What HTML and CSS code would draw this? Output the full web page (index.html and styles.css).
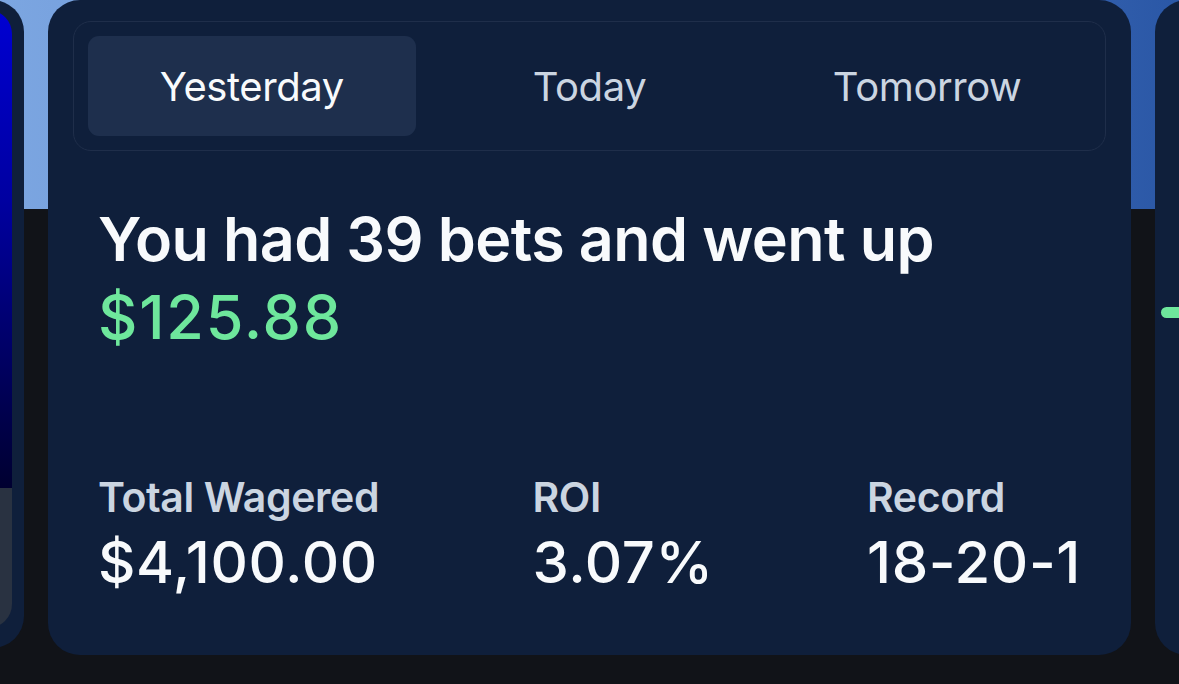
FILE: index.html
```html
<!DOCTYPE html>
<html lang="en">
<head>
<meta charset="utf-8">
<title>Bets summary</title>
<link rel="stylesheet" href="styles.css">
</head>
<body>
<div class="carousel">
  <div class="card card-side card-prev">
    <div class="media">
      <div class="media-art"></div>
      <div class="media-foot"></div>
    </div>
  </div>

  <div class="card card-main">
    <div class="tabs">
      <div class="tab active">Yesterday</div>
      <div class="tab">Today</div>
      <div class="tab">Tomorrow</div>
    </div>
    <div class="body">
      <h1 class="headline">You had 39 bets and went up<br><span class="gain">$125.88</span></h1>
      <div class="stats">
        <div class="stat">
          <div class="stat-label">Total Wagered</div>
          <div class="stat-value">$4,100.00</div>
        </div>
        <div class="stat">
          <div class="stat-label">ROI</div>
          <div class="stat-value">3.07%</div>
        </div>
        <div class="stat">
          <div class="stat-label">Record</div>
          <div class="stat-value">18-20-1</div>
        </div>
      </div>
    </div>
  </div>

  <div class="card card-side card-next">
    <div class="pill"></div>
  </div>
</div>
</body>
</html>
```

FILE: styles.css
```css
html, body {
  margin: 0;
  padding: 0;
}

body {
  width: 1179px;
  height: 684px;
  overflow: hidden;
  font-family: "Inter", "Noto Sans", "Liberation Sans", sans-serif;
  background:
    linear-gradient(to right, #7ca6e1 0%, #5a86cc 50%, #2a57a6 100%) top left / 100% 209px no-repeat,
    #111318;
}

.carousel {
  display: flex;
  justify-content: center;
  gap: 24px;
  width: 1179px;
  overflow: hidden;
}

.card {
  flex: 0 0 1083px;
  height: 655px;
  box-sizing: border-box;
  border-radius: 32px;
  background: #0f1f3b;
}

.card-prev {
  display: flex;
  justify-content: flex-end;
  padding: 10px 12px 20px 12px;
  height: 648px;
}

.media {
  width: 100%;
  display: flex;
  flex-direction: column;
  border-radius: 24px;
  overflow: hidden;
}

.media-art {
  height: 478px;
  background: linear-gradient(to bottom, #0000d2 0%, #0000a0 40%, #000030 100%);
}

.media-foot {
  flex: 1;
  background: #293241;
}

.card-next {
  padding-top: 307px;
  padding-left: 6px;
}

.pill {
  height: 11px;
  width: 200px;
  border-radius: 6px;
  background: #6ee79c;
}

.card-main {
  padding: 21px 25px 0 25px;
}

.tabs {
  display: grid;
  grid-template-columns: repeat(3, 1fr);
  gap: 10px;
  height: 130px;
  box-sizing: border-box;
  padding: 14px;
  border: 1.5px solid #1f2e4a;
  border-radius: 18px;
}

.tab {
  display: flex;
  align-items: center;
  justify-content: center;
  border-radius: 11px;
  font-size: 40px;
  font-weight: 400;
  letter-spacing: -0.4px;
  color: #cbd5e1;
}

.tab.active {
  background: #1e2f4d;
  color: #f8fafc;
}

.body {
  padding: 0 25px;
}

.headline {
  margin: 49px 0 0 0;
  font-size: 61px;
  line-height: 78px;
  font-weight: 600;
  letter-spacing: -0.6px;
  color: #f8fafc;
}

.gain {
  color: #6ee79c;
  font-weight: 500;
  letter-spacing: 1.8px;
}

.stats {
  display: flex;
  justify-content: space-between;
  margin-top: 115px;
}

.stat-label {
  font-size: 41px;
  line-height: 52px;
  font-weight: 600;
  letter-spacing: -0.4px;
  color: #cbd5e1;
}

.stat-value {
  margin-top: 6px;
  font-size: 58px;
  line-height: 66px;
  font-weight: 500;
  letter-spacing: 0.6px;
  color: #f8fafc;
}
```
